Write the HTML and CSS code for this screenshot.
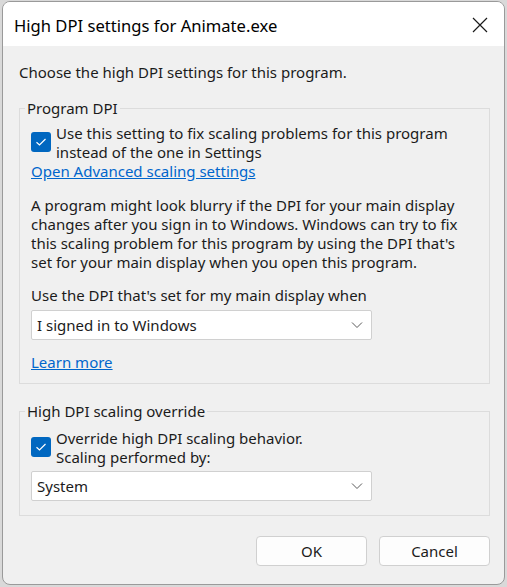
FILE: index.html
```html
<!DOCTYPE html>
<html>
<head>
<meta charset="utf-8">
<link rel="stylesheet" href="styles.css">
</head>
<body>
<div class="window">
  <div class="titlebar">
    <span class="title">High DPI settings for Animate.exe</span>
    <svg class="close" width="16" height="16" viewBox="0 0 16 16"><path d="M1 1 L15 15 M15 1 L1 15" stroke="#1a1a1a" stroke-width="1.2" fill="none"/></svg>
  </div>
  <div class="content">
    <p class="intro">Choose the high DPI settings for this program.</p>
    <fieldset class="group g1">
      <legend>Program DPI</legend>
      <div class="check-row">
        <span class="checkbox"><svg width="20" height="20" viewBox="0 0 20 20"><path d="M5.5 10.2 L8.5 13 L14.5 7" stroke="#fff" stroke-width="1.2" fill="none"/></svg></span>
        <span class="check-label">Use this setting to fix scaling problems for this program<br>instead of the one in Settings</span>
      </div>
      <a class="link">Open Advanced scaling settings</a>
      <p class="para">A program might look blurry if the DPI for your main display changes after you sign in to Windows. Windows can try to fix this scaling problem for this program by using the DPI that's set for your main display when you open this program.</p>
      <p class="label">Use the DPI that's set for my main display when</p>
      <div class="select"><span>I signed in to Windows</span><svg width="12" height="8" viewBox="0 0 12 8"><path d="M1 1.5 L6 6.5 L11 1.5" stroke="#5a5a5a" stroke-width="1" fill="none"/></svg></div>
      <a class="link learn">Learn more</a>
    </fieldset>
    <fieldset class="group g2">
      <legend>High DPI scaling override</legend>
      <div class="check-row">
        <span class="checkbox"><svg width="20" height="20" viewBox="0 0 20 20"><path d="M5.5 10.2 L8.5 13 L14.5 7" stroke="#fff" stroke-width="1.2" fill="none"/></svg></span>
        <span class="check-label">Override high DPI scaling behavior.<br>Scaling performed by:</span>
      </div>
      <div class="select"><span>System</span><svg width="12" height="8" viewBox="0 0 12 8"><path d="M1 1.5 L6 6.5 L11 1.5" stroke="#5a5a5a" stroke-width="1" fill="none"/></svg></div>
    </fieldset>
    <div class="buttons">
      <button class="btn">OK</button>
      <button class="btn">Cancel</button>
    </div>
  </div>
</div>
</body>
</html>
```
FILE: styles.css
```css
html, body {
  margin: 0;
  padding: 0;
  height: 100%;
}
body {
  background: #d9d9d9;
  font-family: "Noto Sans", "Open Sans", sans-serif;
  font-size: 15px;
  color: #1b1b1b;
  overflow: hidden;
}
.window {
  margin: 1px 0 0 2px;
  width: 501px;
  height: 582px;
  border: 1px solid #9a9a9a;
  border-radius: 8px;
  overflow: hidden;
  background: #f0f0f0;
  display: flex;
  flex-direction: column;
}
.titlebar {
  height: 44px;
  background: #ffffff;
  display: flex;
  align-items: center;
  justify-content: space-between;
  padding: 2px 16px 0 11px;
  box-sizing: border-box;
}
.title {
  font-size: 16.6px;
  color: #000;
}
.close {
  display: block;
}
.content {
  padding: 17px 14px 0 16px;
  line-height: 19px;
}
.intro {
  margin: 0 0 17px 0;
}
.group {
  margin: 0;
  border: 1px solid #dcdcdc;
  padding: 6px 11px 11px 11px;
}
.group legend {
  padding: 0 2px;
  margin-left: -6px;
}
.check-row {
  display: flex;
  align-items: flex-start;
  gap: 5px;
}
.checkbox {
  width: 20px;
  height: 20px;
  background: #0067c0;
  border-radius: 3px;
  flex: none;
  margin-top: 8px;
}
.checkbox svg {
  display: block;
}
.link {
  display: inline-block;
  color: #0066cc;
  text-decoration: underline;
}
.para {
  margin: 15px 0 14px 0;
}
.label {
  margin: 0 0 5px 0;
}
.select {
  width: 326px;
  height: 28px;
  background: #ffffff;
  border: 1px solid #d0d0d0;
  border-radius: 2px;
  display: flex;
  align-items: center;
  justify-content: space-between;
  padding: 0 8px 0 5px;
  box-sizing: content-box;
}
.learn {
  margin-top: 13px;
}
.g2 {
  margin-top: 18px;
  padding-top: 8px;
  padding-bottom: 14px;
}
.g2 .check-row {
  margin-bottom: 4px;
}
.buttons {
  display: flex;
  justify-content: flex-end;
  gap: 12px;
  margin-top: 20px;
}
.btn {
  width: 111px;
  height: 30px;
  background: #fdfdfd;
  border: 1px solid #d0d0d0;
  border-radius: 4px;
  font-family: inherit;
  font-size: 15px;
  color: #1b1b1b;
  padding: 0;
}
```
